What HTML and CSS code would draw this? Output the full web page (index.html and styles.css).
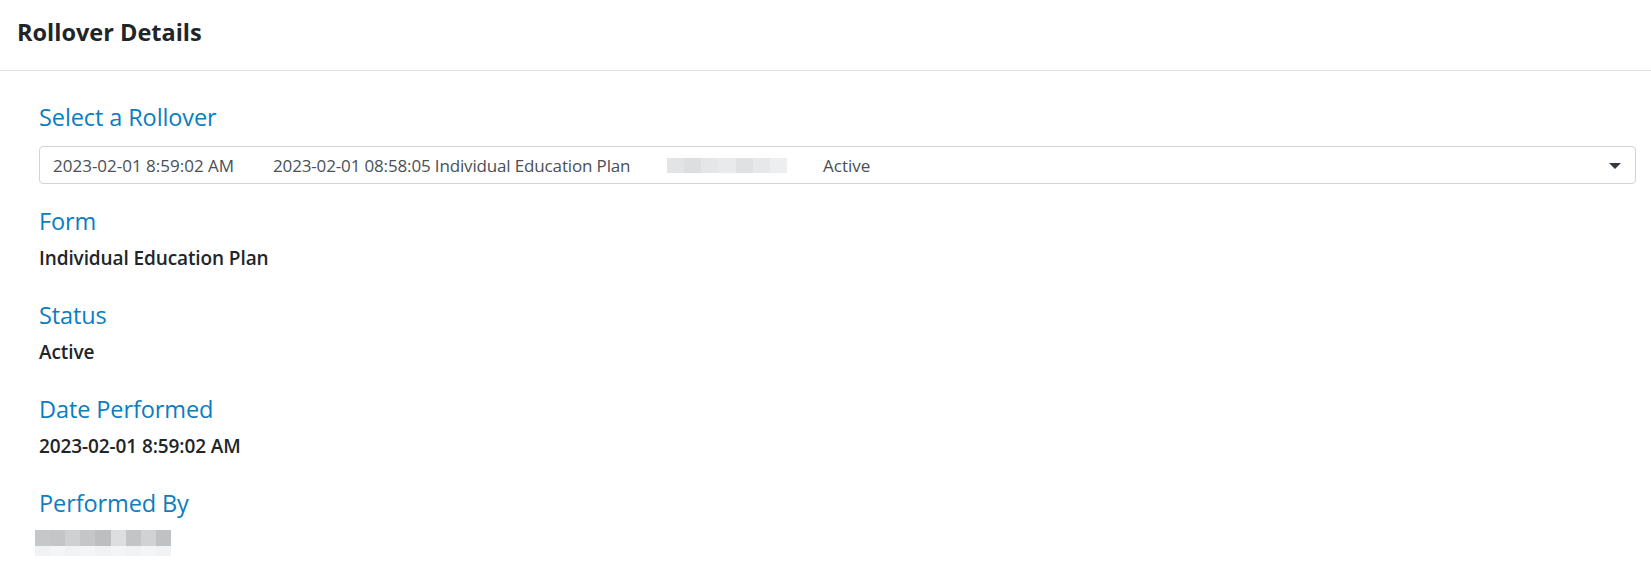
FILE: index.html
```html
<!DOCTYPE html>
<html>
<head>
<meta charset="utf-8">
<link rel="stylesheet" href="styles.css">
</head>
<body>
<header class="header">
  <h1 class="title">Rollover Details</h1>
</header>
<main class="content">
  <h2 class="label select-label">Select a Rollover</h2>
  <div class="select">
    <span class="opt-date">2023-02-01 8:59:02 AM</span>
    <span class="opt-name">2023-02-01 08:58:05 Individual Education Plan</span>
    <span class="blur blur-sel"><i></i><i></i><i></i><i></i><i></i><i></i><i></i></span>
    <span class="opt-status">Active</span>
    <span class="caret"></span>
  </div>
  <section class="field">
    <h2 class="label">Form</h2>
    <div class="value">Individual Education Plan</div>
  </section>
  <section class="field">
    <h2 class="label">Status</h2>
    <div class="value">Active</div>
  </section>
  <section class="field">
    <h2 class="label">Date Performed</h2>
    <div class="value">2023-02-01 8:59:02 AM</div>
  </section>
  <section class="field">
    <h2 class="label">Performed By</h2>
    <div class="blur-user">
      <div class="row dark"><i></i><i></i><i></i><i></i><i></i><i></i><i></i><i></i><i></i></div>
      <div class="row light"><i></i><i></i><i></i><i></i><i></i><i></i><i></i><i></i><i></i></div>
    </div>
  </section>
</main>
</body>
</html>
```

FILE: styles.css
```css
* { box-sizing: border-box; }
html, body { margin: 0; padding: 0; background: #fff; }
body {
  font-family: "Open Sans", "Noto Sans", sans-serif;
  color: #212529;
  width: 1651px;
  height: 569px;
  overflow: hidden;
}
.header {
  height: 71px;
  border-bottom: 1px solid #dee2e6;
  padding: 16px 0 0 17px;
}
.title {
  margin: 0;
  font-size: 23.5px;
  line-height: 32px;
  font-weight: 700;
  color: #212529;
}
.content {
  padding: 31px 15px 0 39px;
}
.label {
  margin: 0;
  font-weight: 400;
  font-size: 23.5px;
  line-height: 30px;
  color: #0b7dc1;
  letter-spacing: -0.1px;
}
.select-label { margin-bottom: 14px; }
.select {
  height: 38px;
  border: 1px solid #ced4da;
  border-radius: 4px;
  display: flex;
  align-items: center;
  padding-left: 13px;
  font-size: 17px;
  color: #495057;
  position: relative;
}
.opt-date { width: 220px; }
.opt-name { width: 394px; letter-spacing: -0.15px; }
.blur { display: flex; width: 120px; height: 15px; margin-right: 36px; }
.blur i { flex: 1; }
.blur-sel i:nth-child(1) { background: #e2e4e6; }
.blur-sel i:nth-child(2) { background: #dcdee0; }
.blur-sel i:nth-child(3) { background: #e4e6e8; }
.blur-sel i:nth-child(4) { background: #e8eaeb; }
.blur-sel i:nth-child(5) { background: #dfe1e3; }
.blur-sel i:nth-child(6) { background: #e6e8ea; }
.blur-sel i:nth-child(7) { background: #eceeef; }
.caret {
  position: absolute;
  right: 14px;
  top: 16px;
  width: 0;
  height: 0;
  border-left: 6.5px solid transparent;
  border-right: 6.5px solid transparent;
  border-top: 6px solid #343a40;
}
.field { margin-top: 28px; }
.select + .field { margin-top: 22px; }
.value {
  font-size: 19px;
  line-height: 28px;
  font-weight: 600;
  margin-top: 8px;
  letter-spacing: -0.1px;
}
.blur-user { width: 136px; margin-top: 12px; margin-left: -4px; }
.blur-user .row { display: flex; }
.blur-user .dark { height: 16px; }
.blur-user .light { height: 10px; }
.blur-user i { flex: 1; }
.dark i:nth-child(1) { background: #c6c7c9; }
.dark i:nth-child(2) { background: #c4c5c7; }
.dark i:nth-child(3) { background: #cfd0d2; }
.dark i:nth-child(4) { background: #c5c6c8; }
.dark i:nth-child(5) { background: #bdbec0; }
.dark i:nth-child(6) { background: #dcdee0; }
.dark i:nth-child(7) { background: #c3c4c6; }
.dark i:nth-child(8) { background: #d0d2d4; }
.dark i:nth-child(9) { background: #c0c1c3; }
.light i { background: #f1f2f3; }
.light i:nth-child(2n) { background: #f4f5f6; }
```
